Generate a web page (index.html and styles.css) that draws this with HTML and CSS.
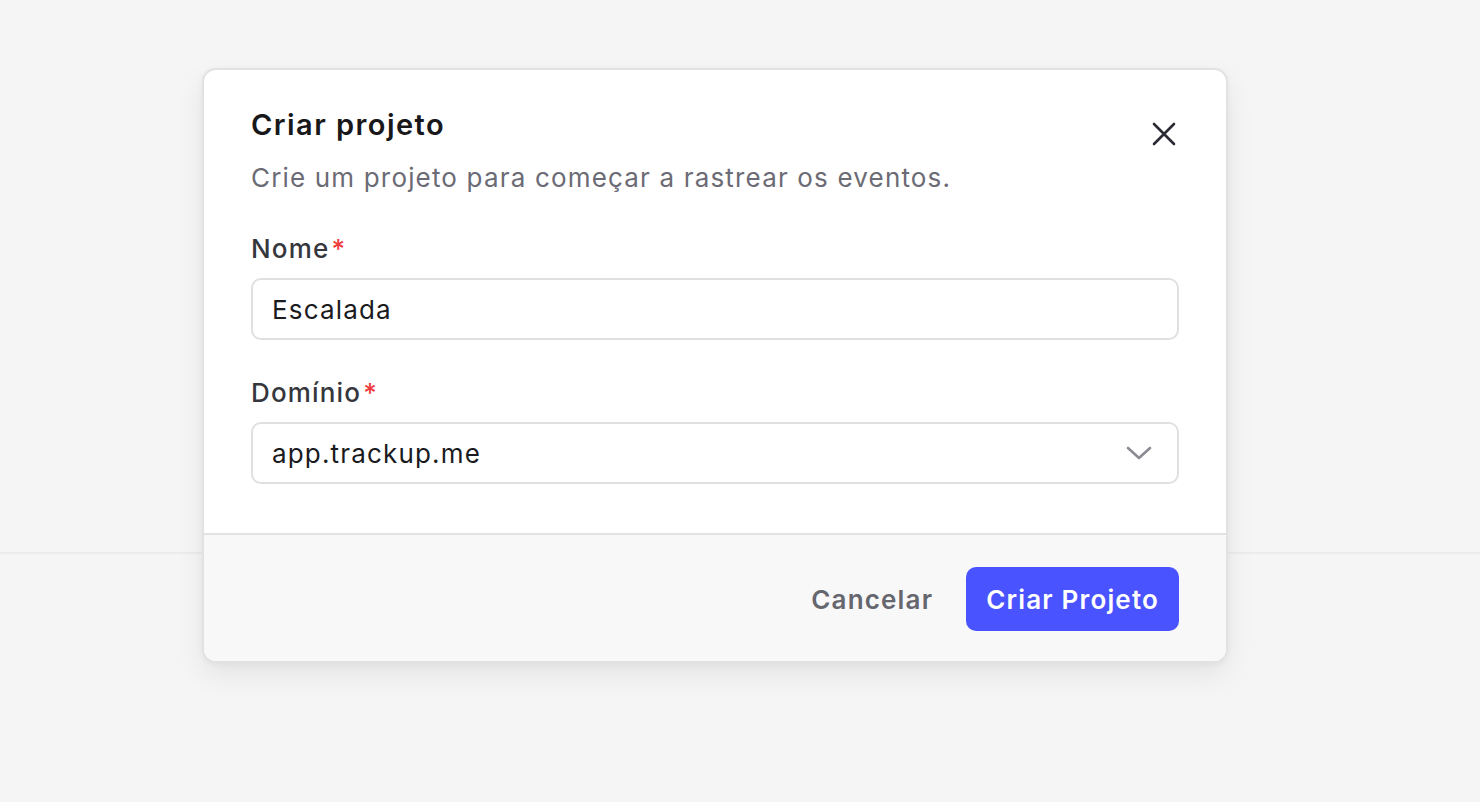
FILE: index.html
```html
<!DOCTYPE html>
<html lang="pt-BR">
<head>
    <meta charset="UTF-8">
    <meta name="viewport" content="width=device-width, initial-scale=1.0">
    <title>Criar projeto</title>
    <link rel="stylesheet" href="styles.css">
</head>
<body>
    <div class="page">
        <div class="page-top"></div>
    </div>

    <div class="modal" role="dialog" aria-labelledby="modalTitle">
        <div class="modal-body">
            <div class="modal-head">
                <div>
                    <h2 id="modalTitle" class="modal-title">Criar projeto</h2>
                    <p class="modal-desc">Crie um projeto para começar a rastrear os eventos.</p>
                </div>
                <button class="close-btn" aria-label="Fechar">
                    <svg width="24" height="24" viewBox="0 0 24 24" fill="none" stroke="currentColor" stroke-width="2.6" stroke-linecap="round">
                        <path d="M2 2 L22 22 M22 2 L2 22"/>
                    </svg>
                </button>
            </div>

            <div class="field">
                <label class="field-label" for="nome">Nome<span class="req">*</span></label>
                <input id="nome" class="field-input" type="text" value="Escalada">
            </div>

            <div class="field">
                <label class="field-label" for="dominio">Domínio<span class="req">*</span></label>
                <div class="select">
                    <span id="dominio" class="select-value">app.trackup.me</span>
                    <svg class="select-chevron" width="26" height="16" viewBox="0 0 26 16" fill="none" stroke="currentColor" stroke-width="2.6" stroke-linecap="round" stroke-linejoin="round">
                        <path d="M2 3 L13 13 L24 3"/>
                    </svg>
                </div>
            </div>
        </div>

        <div class="modal-footer">
            <button class="btn btn-ghost">Cancelar</button>
            <button class="btn btn-primary">Criar Projeto</button>
        </div>
    </div>
</body>
</html>
```

FILE: styles.css
```css
* {
    box-sizing: border-box;
}
body {
    margin: 0;
    font-family: Inter, "Noto Sans", Arial, sans-serif;
    background-color: #f5f5f5;
    color: #1b1b1f;
    -webkit-font-smoothing: antialiased;
}
.page {
    height: 802px;
}
.page-top {
    height: 554px;
    border-bottom: 2px solid #ececec;
}
.modal {
    position: absolute;
    top: 68px;
    left: 202px;
    width: 1026px;
    background-color: #fff;
    border: 2px solid #e2e2e2;
    border-radius: 14px;
    overflow: hidden;
    box-shadow: 0 12px 28px rgba(0, 0, 0, 0.07), 0 2px 6px rgba(0, 0, 0, 0.04);
}
.modal-body {
    padding: 37px 47px 49px 47px;
}
.modal-head {
    display: flex;
    justify-content: space-between;
    align-items: flex-start;
}
.modal-title {
    margin: 0;
    font-size: 29px;
    line-height: 36px;
    font-weight: 600;
    color: #18181b;
    letter-spacing: 0.05em;
}
.modal-desc {
    margin: 19px 0 0 0;
    font-size: 26px;
    line-height: 32px;
    color: #6b6b75;
    letter-spacing: 0.045em;
}
.close-btn {
    border: none;
    background: none;
    padding: 0;
    margin: 15px 3px 0 0;
    color: #2b2b33;
    cursor: pointer;
    width: 24px;
    height: 24px;
}
.close-btn svg {
    display: block;
}
.field {
    margin-top: 39px;
}
.field + .field {
    margin-top: 37px;
}
.field-label {
    display: block;
    font-size: 26px;
    line-height: 32px;
    font-weight: 500;
    color: #36363d;
    letter-spacing: 0.045em;
    margin-bottom: 13px;
}
.req {
    color: #ef3b3b;
    margin-left: 2px;
}
.field-input,
.select {
    width: 100%;
    height: 62px;
    border: 2px solid #e0e0e0;
    border-radius: 10px;
    background-color: #fff;
    padding: 0 19px;
    font-family: inherit;
    font-size: 26px;
    letter-spacing: 0.045em;
    color: #1b1b1f;
    outline: none;
}
.select {
    display: flex;
    align-items: center;
    justify-content: space-between;
}
.select-chevron {
    color: #8b8b94;
    margin-right: 6px;
}
.modal-footer {
    display: flex;
    justify-content: flex-end;
    align-items: center;
    gap: 13px;
    padding: 32px 47px 30px 47px;
    background-color: #f8f8f8;
    border-top: 2px solid #e2e2e2;
}
.btn {
    height: 64px;
    border: none;
    border-radius: 10px;
    padding: 0 20px;
    font-family: inherit;
    font-size: 26px;
    font-weight: 600;
    letter-spacing: 0.045em;
    cursor: pointer;
}
.btn-ghost {
    background: none;
    color: #66666f;
}
.btn-primary {
    background-color: #4953ff;
    color: #fff;
}
```
